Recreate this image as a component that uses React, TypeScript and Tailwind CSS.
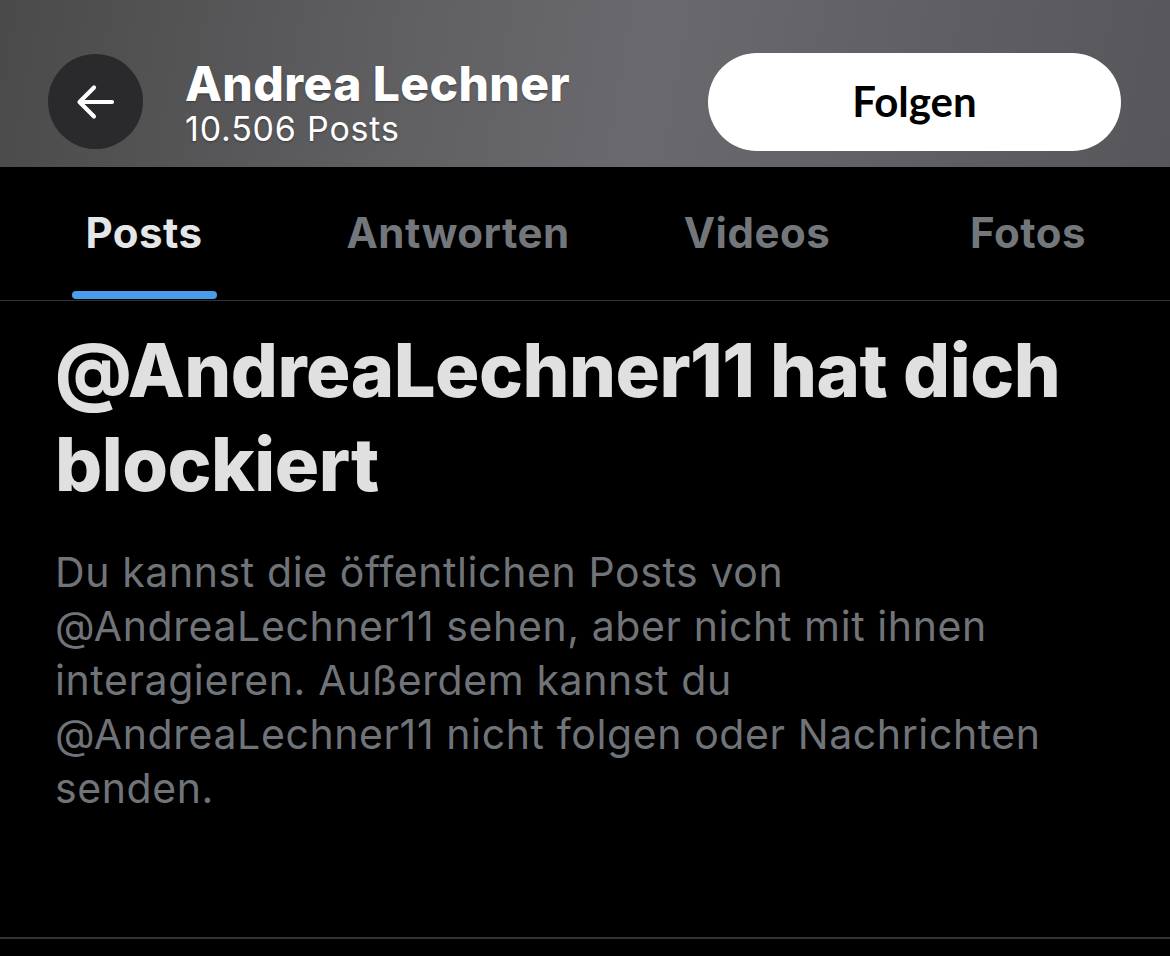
import React, { FC } from 'react'

const tabs = [
  { label: 'Posts', width: 'w-[288px]', active: true },
  { label: 'Antworten', width: 'w-[340px]', active: false },
  { label: 'Videos', width: 'w-[258px]', active: false },
  { label: 'Fotos', width: 'w-[284px]', active: false },
]

const BackArrow: FC = () => (
  <svg width="40" height="36" viewBox="0 0 40 36" fill="none">
    <path
      d="M36 18H4M18 3.5L3.5 18L18 32.5"
      stroke="white"
      strokeWidth="4.2"
      strokeLinecap="round"
      strokeLinejoin="round"
    />
  </svg>
)

const App: FC = () => {
  return (
    <div className="w-[1170px] h-[956px] bg-black overflow-hidden font-['Inter','Liberation_Sans',sans-serif]">
      {/* blurred banner with back button, name and follow button */}
      <header className="h-[167px] pt-[36px] flex items-center bg-[linear-gradient(100deg,#4a4a4a_0%,#606063_35%,#6a6a6e_55%,#5f5f63_80%,#57575b_100%)]">
        <button className="ml-[48px] w-[95px] h-[95px] rounded-full bg-[#2a2a2c] flex items-center justify-center">
          <BackArrow />
        </button>
        <div className="ml-[42px] flex flex-col text-white [text-shadow:0_1px_2px_rgba(0,0,0,0.35)]">
          <span className="text-[48px] leading-[54px] font-extrabold tracking-[0.4px]">Andrea Lechner</span>
          <span className="text-[34px] leading-[36px] font-normal tracking-[0.8px]">10.506 Posts</span>
        </div>
        <button className="ml-auto mr-[49px] w-[413px] h-[98px] rounded-full bg-white text-black text-[42px] font-bold font-['Lato','Open_Sans',sans-serif]">
          Folgen
        </button>
      </header>

      {/* profile tabs */}
      <nav className="flex h-[134px] border-b border-[#2f3336]">
        {tabs.map((tab) => (
          <div key={tab.label} className={`${tab.width} relative flex justify-center pt-[41px]`}>
            <span
              className={`text-[42px] leading-[50px] font-bold tracking-[0.5px] ${tab.active ? 'text-[#e4e6e7]' : 'text-[#73777c]'}`}
            >
              {tab.label}
            </span>
            {tab.active && (
              <div className="absolute bottom-[1px] left-[72px] w-[145px] h-[8px] rounded-full bg-[#4a9de8]" />
            )}
          </div>
        ))}
      </nav>

      {/* blocked notice */}
      <section className="h-[638px] border-b-2 border-[#333] px-[55px] pt-[22px]">
        <h1 className="text-[74px] leading-[94px] font-extrabold text-[#e0e0e0] tracking-[-0.5px]">
          @AndreaLechner11 hat dich
          <br />
          blockiert
        </h1>
        <p className="mt-[34px] text-[41px] leading-[54px] text-[#707479] tracking-[0.6px]">
          Du kannst die öffentlichen Posts von
          <br />
          @AndreaLechner11 sehen, aber nicht mit ihnen
          <br />
          interagieren. Außerdem kannst du
          <br />
          @AndreaLechner11 nicht folgen oder Nachrichten
          <br />
          senden.
        </p>
      </section>
    </div>
  )
}

export default App
